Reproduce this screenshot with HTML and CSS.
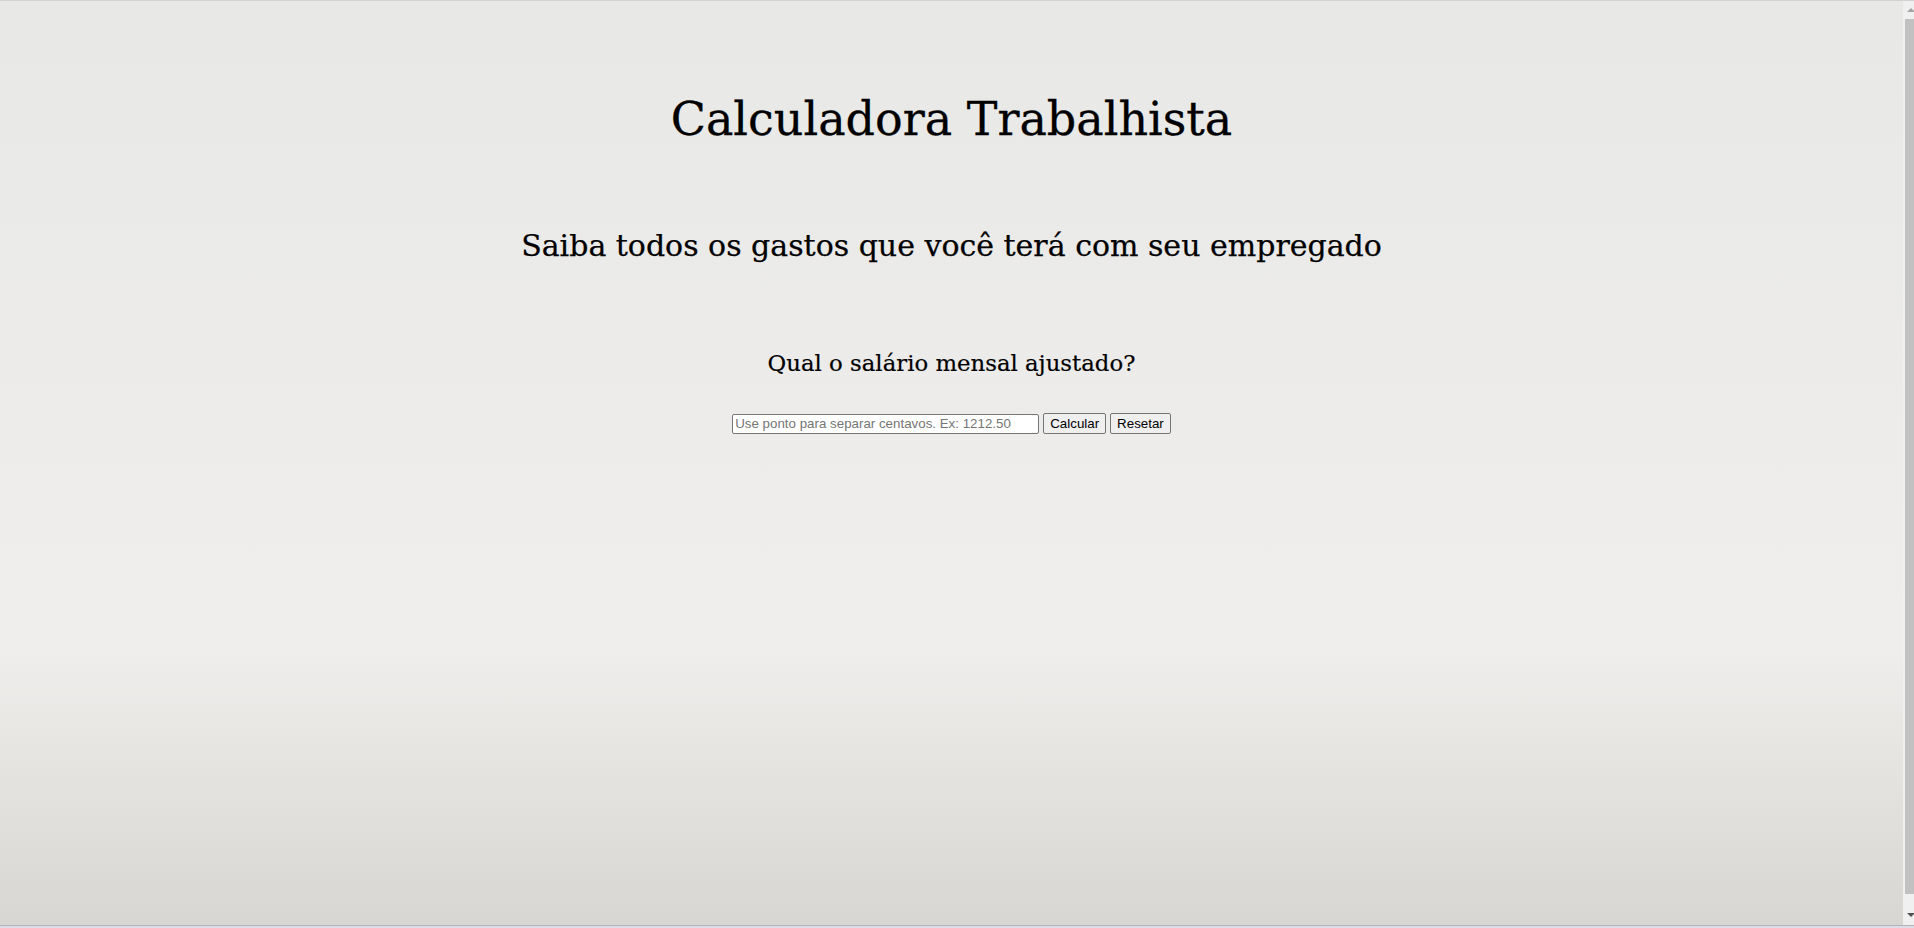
FILE: index.html
```html
<!DOCTYPE html>
<html lang="pt-BR">
<head>
<meta charset="utf-8">
<title>Calculadora Trabalhista</title>
<link rel="stylesheet" href="styles.css">
</head>
<body>
<main class="page">
  <h1 class="title">Calculadora Trabalhista</h1>
  <h2 class="subtitle">Saiba todos os gastos que você terá com seu empregado</h2>
  <h3 class="question">Qual o salário mensal ajustado?</h3>
  <div class="form">
    <input class="salary" type="text" placeholder="Use ponto para separar centavos. Ex: 1212.50">
    <button class="btn" type="button">Calcular</button>
    <button class="btn" type="button">Resetar</button>
  </div>
</main>
<aside class="scrollbar" aria-hidden="true">
  <div class="sb-btn"><span class="arrow-up"></span></div>
  <div class="sb-thumb"></div>
  <div class="sb-btn sb-btn-down"><span class="arrow-down"></span></div>
</aside>
</body>
</html>
```

FILE: styles.css
```css
html {
  height: 100%;
  background: #dcdce6;
}
body {
  margin: 0;
  height: calc(100% - 2px);
  box-sizing: border-box;
  border-top: 1px solid #d2d2d2;
  border-bottom: 1px solid #b3b3bb;
  display: flex;
  overflow: hidden;
  background: linear-gradient(to bottom, #e8e8e6 0%, #efeeec 70%, #d7d6d2 100%);
  font-family: "DejaVu Serif", "Liberation Serif", serif;
  color: #000;
}
.page {
  flex: 1;
  display: flex;
  flex-direction: column;
  align-items: center;
  padding-top: 88px;
}
.title {
  margin: 0;
  font-size: 46px;
  line-height: 60px;
  font-weight: normal;
  -webkit-text-stroke: 0.3px #000;
}
.subtitle {
  margin: 77px 0 0;
  font-size: 30px;
  line-height: 40px;
  font-weight: normal;
  -webkit-text-stroke: 0.25px #000;
}
.question {
  margin: 82px 0 0;
  font-size: 22.8px;
  line-height: 30px;
  font-weight: normal;
  -webkit-text-stroke: 0.2px #000;
}
.form {
  margin-top: 35px;
  display: flex;
  gap: 4px;
  align-items: center;
}
.salary {
  box-sizing: border-box;
  width: 307px;
  height: 20px;
  padding: 1px 2px;
  border: 1px solid #767676;
  border-radius: 2px;
  background: #fff;
  font-family: "Liberation Sans", Arial, sans-serif;
  font-size: 13.33px;
}
.salary::placeholder {
  color: #757575;
}
.btn {
  box-sizing: border-box;
  height: 21px;
  padding: 1px 6px;
  border: 1px solid #767676;
  border-radius: 2px;
  background: #efefef;
  color: #000;
  font-family: "Liberation Sans", Arial, sans-serif;
  font-size: 13.33px;
}
.scrollbar {
  width: 11px;
  flex: none;
  background: #f0f0f0;
  display: flex;
  flex-direction: column;
}
.sb-btn {
  height: 18px;
  display: flex;
  justify-content: center;
  align-items: center;
  padding-left: 4px;
}
.sb-btn-down {
  height: 31px;
  align-items: flex-end;
  padding-bottom: 8px;
  box-sizing: border-box;
}
.sb-thumb {
  flex: 1;
  margin-left: 2px;
  background: #c1c1c1;
}
.arrow-up {
  width: 0;
  height: 0;
  border-left: 4px solid transparent;
  border-right: 4px solid transparent;
  border-bottom: 4px solid #a3a3a3;
}
.arrow-down {
  width: 0;
  height: 0;
  border-left: 4px solid transparent;
  border-right: 4px solid transparent;
  border-top: 4px solid #505050;
}
```
